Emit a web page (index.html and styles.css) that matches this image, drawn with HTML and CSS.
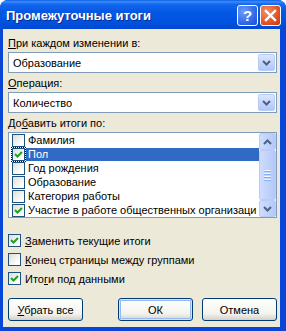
FILE: index.html
```html
<!DOCTYPE html>
<html lang="ru">
<head>
    <meta charset="UTF-8">
    <title>Промежуточные итоги</title>
    <link rel="stylesheet" href="styles.css">
</head>
<body>

<div class="window">
    <div class="titlebar">
        <span class="title">Промежуточные итоги</span>
        <span class="cap-btn help">?</span>
        <span class="cap-btn close">
            <svg width="13" height="13" viewBox="0 0 13 13"><path d="M2 2 L11 11 M11 2 L2 11" stroke="#fff" stroke-width="2.4" stroke-linecap="square"/></svg>
        </span>
    </div>

    <div class="client">
        <div class="label"><u>П</u>ри каждом изменении в:</div>
        <div class="combo">
            <span class="combo-text">Образование</span>
            <span class="drop"><svg width="9" height="6" viewBox="0 0 9 6"><path d="M1 1 L4.5 4.5 L8 1" fill="none" stroke="#4D6185" stroke-width="2"/></svg></span>
        </div>

        <div class="label"><u>О</u>перация:</div>
        <div class="combo">
            <span class="combo-text">Количество</span>
            <span class="drop"><svg width="9" height="6" viewBox="0 0 9 6"><path d="M1 1 L4.5 4.5 L8 1" fill="none" stroke="#4D6185" stroke-width="2"/></svg></span>
        </div>

        <div class="label">До<u>б</u>авить итоги по:</div>
        <div class="listbox">
            <div class="items">
                <div class="item"><span class="box"></span><span class="item-text">Фамилия</span></div>
                <div class="item selected"><span class="box checked focus"></span><span class="item-text">Пол</span></div>
                <div class="item"><span class="box"></span><span class="item-text">Год рождения</span></div>
                <div class="item"><span class="box"></span><span class="item-text">Образование</span></div>
                <div class="item"><span class="box"></span><span class="item-text">Категория работы</span></div>
                <div class="item"><span class="box checked"></span><span class="item-text">Участие в работе общественных организаци</span></div>
            </div>
            <div class="scrollbar">
                <span class="sb-btn"><svg width="9" height="6" viewBox="0 0 9 6"><path d="M1 5 L4.5 1.5 L8 5" fill="none" stroke="#4D6185" stroke-width="2"/></svg></span>
                <span class="sb-thumb"><i></i><i></i><i></i><i></i></span>
                <span class="sb-btn"><svg width="9" height="6" viewBox="0 0 9 6"><path d="M1 1 L4.5 4.5 L8 1" fill="none" stroke="#4D6185" stroke-width="2"/></svg></span>
            </div>
        </div>

        <div class="options">
            <div class="option"><span class="box checked"></span><span><u>З</u>аменить текущие итоги</span></div>
            <div class="option"><span class="box"></span><span><u>К</u>онец страницы между группами</span></div>
            <div class="option"><span class="box checked"></span><span>Ито<u>г</u>и под данными</span></div>
        </div>

        <div class="buttons">
            <button class="btn"><u>У</u>брать все</button>
            <span class="spacer"></span>
            <button class="btn default">ОК</button>
            <button class="btn">Отмена</button>
        </div>
    </div>
</div>

</body>
</html>
```

FILE: styles.css
```css
body {
    margin: 0;
    font-family: "Liberation Sans", Arial, sans-serif;
    font-size: 11px;
    color: #000;
    background: #fff;
}
u {
    text-decoration: underline;
    text-underline-offset: 1px;
}
.window {
    width: 286px;
    height: 331px;
    background: #0846D8;
    border-radius: 8px 8px 0 0;
    display: flex;
    flex-direction: column;
    overflow: hidden;
}
.titlebar {
    height: 29px;
    flex: none;
    display: flex;
    align-items: center;
    gap: 2px;
    padding: 1px 5px 0 6px;
    box-sizing: border-box;
    background: linear-gradient(#0A5FE6 0%, #3C8DF8 6%, #1468EE 14%, #0558E4 40%, #0052E0 75%, #0048D2 100%);
}
.title {
    flex: 1;
    color: #fff;
    font-weight: bold;
    font-size: 13px;
    text-shadow: 1px 1px #0A2A8F;
}
.cap-btn {
    width: 21px;
    height: 21px;
    box-sizing: border-box;
    border: 1px solid #fff;
    border-radius: 3px;
    display: flex;
    align-items: center;
    justify-content: center;
    color: #fff;
    font-weight: bold;
    font-size: 15px;
}
.help {
    background: radial-gradient(circle at 30% 30%, #6E9DF8, #2A62E6 70%, #1E50D2);
}
.close {
    background: radial-gradient(circle at 30% 30%, #F0906C, #DD4A1E 70%, #C63A12);
}
.client {
    flex: 1;
    margin: 0 6px 4px 3px;
    background: #ECE9D8;
    padding: 8px 3px 0 5px;
}
.label {
    line-height: 13px;
    height: 13px;
}
.combo {
    margin: 2px 0 4px;
    height: 21px;
    box-sizing: border-box;
    border: 1px solid #7F9DB9;
    background: #fff;
    display: flex;
    align-items: center;
    padding: 1px;
}
.combo-text {
    flex: 1;
    padding-left: 3px;
}
.drop {
    width: 17px;
    height: 17px;
    box-sizing: border-box;
    border: 1px solid #B9CCF7;
    border-radius: 2px;
    background: linear-gradient(#DCE6FD, #C1D3FB 60%, #B0C6F6);
    display: flex;
    align-items: center;
    justify-content: center;
}
.listbox {
    margin-top: 2px;
    height: 86px;
    box-sizing: border-box;
    border: 1px solid #7F9DB9;
    background: #fff;
    display: flex;
}
.items {
    flex: 1;
    overflow: hidden;
}
.item {
    height: 14px;
    display: flex;
    align-items: center;
    padding-left: 3px;
    white-space: nowrap;
}
.item-text {
    margin-left: 1px;
    padding: 0 2px;
    line-height: 13px;
}
.item.selected .item-text {
    flex: 1;
    background: #316AC5;
    color: #fff;
}
.box {
    width: 13px;
    height: 13px;
    flex: none;
    box-sizing: border-box;
    border: 1px solid #1C5180;
    background: linear-gradient(135deg, #DCDCD7, #FFFFFF 80%);
}
.box.checked {
    background:
        url("data:image/svg+xml;utf8,<svg xmlns='http://www.w3.org/2000/svg' width='11' height='11'><path d='M2 5 L4.5 7.5 L9 3' fill='none' stroke='%2321A121' stroke-width='2'/></svg>") center no-repeat,
        linear-gradient(135deg, #DCDCD7, #FFFFFF 80%);
}
.box.focus {
    outline: 1px dotted #000;
    outline-offset: 0;
}
.scrollbar {
    width: 17px;
    flex: none;
    background: #FDFDFA;
    display: flex;
    flex-direction: column;
}
.sb-btn, .sb-thumb {
    box-sizing: border-box;
    border: 1px solid #B9CCF7;
    border-radius: 2px;
    background: linear-gradient(90deg, #CFDCFC, #C1D3FB 50%, #B4C8F7);
    display: flex;
    align-items: center;
    justify-content: center;
}
.sb-btn {
    height: 17px;
}
.sb-thumb {
    flex: 1;
    flex-direction: column;
    gap: 1px;
}
.sb-thumb i {
    width: 7px;
    height: 1px;
    background: #EEF3FE;
    border-bottom: 1px solid #8CB0F8;
}
.options {
    margin-top: 13px;
}
.option {
    height: 19px;
    display: flex;
    align-items: center;
    gap: 4px;
}
.buttons {
    margin-top: 10px;
    display: flex;
    gap: 9px;
}
.spacer {
    flex: 1;
}
.btn {
    width: 75px;
    height: 23px;
    padding: 0;
    font: inherit;
    color: #000;
    border: 1px solid #003C74;
    border-radius: 3px;
    background: linear-gradient(#FFFFFF, #F3F3EF 70%, #D6D0C5);
}
.btn.default {
    box-shadow: inset 0 0 0 1px #CEE7FF, inset 0 0 0 2px #98B8F4;
}
```
